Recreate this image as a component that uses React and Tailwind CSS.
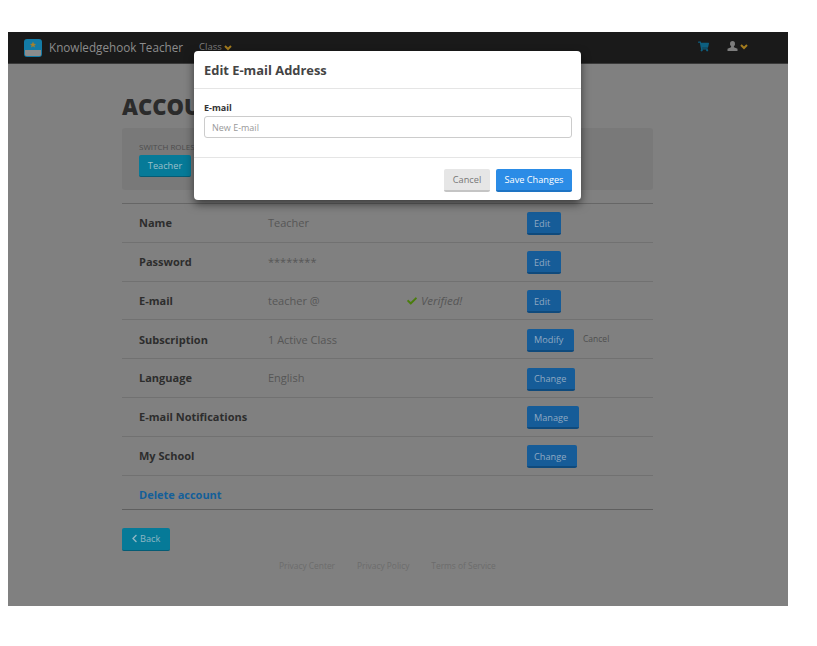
import React from 'react';
import { FaCheck, FaChevronLeft, FaShoppingCart } from 'react-icons/fa';

const rows = [
    { label: 'Name', value: 'Teacher', action: 'Edit', width: 'w-[34px]' },
    { label: 'Password', value: '********', action: 'Edit', width: 'w-[34px]' },
    { label: 'E-mail', value: 'teacher @', verified: true, action: 'Edit', width: 'w-[34px]' },
    { label: 'Subscription', value: '1 Active Class', action: 'Modify', width: 'w-[47px]', cancel: true },
    { label: 'Language', value: 'English', action: 'Change', width: 'w-[48px]' },
    { label: 'E-mail Notifications', action: 'Manage', width: 'w-[52px]' },
    { label: 'My School', action: 'Change', width: 'w-[50px]' },
];

const Logo = () => (
    <svg width="18" height="18" viewBox="0 0 18 18" className="mt-[1px]">
        <rect width="18" height="18" rx="3" fill="#137ba6" />
        <path d="M1 11 H17 V15.5 A1.5 1.5 0 0 1 15.5 17 H2.5 A1.5 1.5 0 0 1 1 15.5 Z" fill="#8c8c8c" />
        <path d="M9 2.5 L9.9 4.8 L12.2 4.9 L10.4 6.3 L11 8.6 L9 7.3 L7 8.6 L7.6 6.3 L5.8 4.9 L8.1 4.8 Z" fill="#a5812d" />
    </svg>
);

const Chevron = () => (
    <svg width="8" height="6" viewBox="0 0 8 6">
        <path d="M1 1 L4 4 L7 1" fill="none" stroke="#a37b1e" strokeWidth="2" />
    </svg>
);

const UserIcon = () => (
    <svg width="11" height="10" viewBox="0 0 11 10">
        <ellipse cx="5.5" cy="2.8" rx="2.5" ry="2.8" fill="#7d7d7d" />
        <path d="M4.2 5 H6.8 L7 6.3 L10.5 7.8 V10 H0.5 V7.8 L4 6.3 Z" fill="#7d7d7d" />
    </svg>
);

const App = () => {
    return (
        <div className="min-h-[646px] bg-white pl-2 pt-8 font-['Open_Sans',sans-serif]">
            <div className="relative h-[574px] w-[780px] overflow-hidden bg-[#808080]">

                {/* Top bar */}
                <div className="flex h-8 items-center justify-between border-b border-[#3a3a3a] bg-[#1a1a1a] pl-4 pr-10">
                    <div className="flex items-center">
                        <Logo />
                        <span className="ml-[7px] mt-[1px] text-[11.7px] text-[#8c8c8c]">Knowledgehook Teacher</span>
                        <span className="ml-4 flex items-center gap-[2px] text-[9.5px] text-[#7d7d7d]">
                            Class <Chevron />
                        </span>
                    </div>
                    <div className="-mt-[3px] flex items-center">
                        <FaShoppingCart size={11} className="text-[#0d5f80]" />
                        <div className="ml-[18px]"><UserIcon /></div>
                        <div className="ml-[2px] mt-[2px] flex"><Chevron /></div>
                    </div>
                </div>

                {/* Account page */}
                <div className="ml-[114px] w-[531px]">
                    <h1 className="mt-[28px] h-[36px] text-[22px] leading-[29px] font-extrabold text-[#2b2b2b]">ACCOUNT</h1>
                    <div className="h-[62px] rounded-[3px] bg-[#797979] pl-[17px] pt-[14px]">
                        <div className="text-[8px] leading-[9px] text-[#4d4d4d]">SWITCH ROLES</div>
                        <button className="mt-1 h-[22px] w-[52px] rounded-[2px] border-b border-[#055c75] bg-[#067a98] text-[9.2px] text-[#9cc0cb]">Teacher</button>
                    </div>

                    <div className="mt-[13px] border-t border-[#666666]">
                        {rows.map((row) => (
                            <div key={row.label} className="flex h-[38.8px] items-center border-b border-[#717171] pl-[17px] pt-[1px]">
                                <div className="w-[129px] shrink-0 whitespace-nowrap text-[11px] font-bold text-[#2d2d2d]">{row.label}</div>
                                <div className="w-[139px] shrink-0 text-[11px] text-[#565656]">{row.value}</div>
                                <div className="flex w-[120px] shrink-0 items-center gap-1 text-[11.5px] italic text-[#565656]">
                                    {row.verified && <><FaCheck size={10} className="text-[#4a7d0c]" /> Verified!</>}
                                </div>
                                <button className={`mt-[1px] h-[23px] ${row.width} rounded-[2px] border-b-2 border-[#0f4a7c] bg-[#165c98] pl-[7px] pt-[2px] text-left text-[9.2px] text-[#8fa9c2]`}>{row.action}</button>
                                {row.cancel && <span className="ml-[9px] text-[8.5px] text-[#4f4f4f]">Cancel</span>}
                            </div>
                        ))}
                        <div className="flex h-[34px] items-center border-b border-[#5f5f5f] pl-[17px] pt-[6px] text-[11px] font-bold text-[#145f99]">
                            Delete account
                        </div>
                    </div>

                    <button className="mt-[18px] flex h-[23px] w-[48px] items-center gap-[1px] rounded-[2px] border-b border-[#055c75] bg-[#067a98] pl-2 text-[9.2px] text-[#8fb7c4]">
                        <FaChevronLeft size={9} /> Back
                    </button>

                    <div className="mt-[9px] ml-[157px] flex gap-[22px] text-[8.4px] text-[#6c6c6c]">
                        <span>Privacy Center</span>
                        <span>Privacy Policy</span>
                        <span>Terms of Service</span>
                    </div>
                </div>

                {/* Modal */}
                <div className="absolute left-[186px] top-[19px] w-[387px] rounded-[4px] bg-white shadow-[0_4px_10px_rgba(0,0,0,0.55)]">
                    <div className="flex h-[38px] items-center border-b border-[#e5e5e5] px-[10px] pt-[2px]">
                        <h3 className="text-[12.9px] font-bold text-[#444444]">Edit E-mail Address</h3>
                    </div>
                    <div className="h-[69px] border-b border-[#e5e5e5] px-[10px] pt-[13px]">
                        <label className="mb-[2px] block text-[9px] leading-[12px] font-bold text-[#333333]">E-mail</label>
                        <input
                            type="text"
                            placeholder="New E-mail"
                            className="block h-[22px] w-[368px] rounded-[3px] border border-[#cccccc] px-[7px] text-[9px] outline-none placeholder:text-[#999999]"
                        />
                    </div>
                    <div className="flex h-[42px] items-start justify-end gap-[6px] pr-[9px] pt-[11px]">
                        <button className="h-[23px] w-[46px] rounded-[2px] border-b-2 border-[#c4c4c4] bg-[#e6e6e6] text-[9.2px] text-[#777777]">Cancel</button>
                        <button className="h-[23px] w-[76px] rounded-[2px] border-b-2 border-[#1e74c4] bg-[#2b8ce6] text-[9.2px] text-white">Save Changes</button>
                    </div>
                </div>
            </div>
        </div>
    );
};

export default App;
